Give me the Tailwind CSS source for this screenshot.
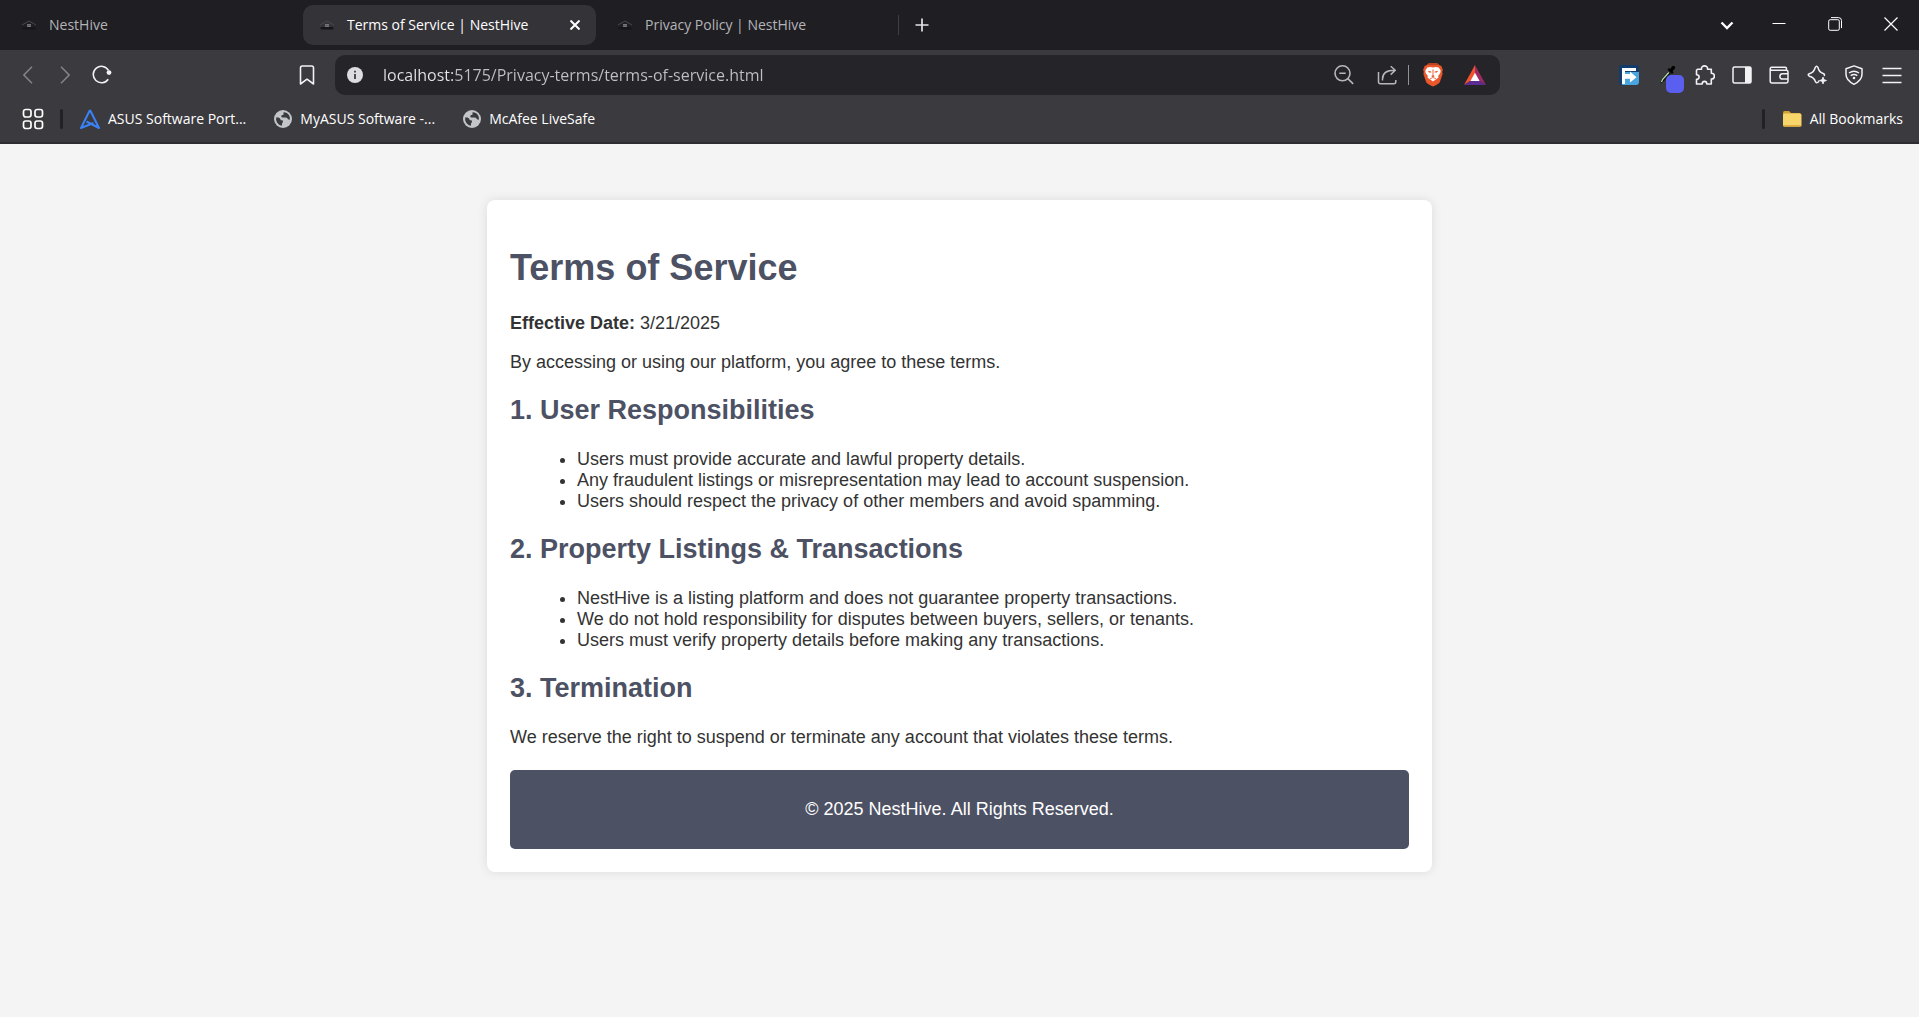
<!DOCTYPE html>
<html lang="en">
<head>
<meta charset="utf-8">
<title>Terms of Service | NestHive</title>
<script src="https://cdn.jsdelivr.net/npm/@tailwindcss/browser@4"></script>
</head>
<body class="min-h-screen bg-[#f4f4f4] font-['Liberation_Sans',Arial,sans-serif] text-[#333333]">
<svg class="hidden" aria-hidden="true">
  <symbol id="nest" viewBox="0 0 16 16"><path d="M1 8 8 4l7 4" fill="none" stroke="#48484c" stroke-width="1"/><rect x="1.500" y="10" width="13" height="2.500" rx="1" fill="#17171a"/><path d="M6.200 7h3.600v3H6.200z" fill="#858587"/><path d="M8 7v3M6.200 8.500h3.600" stroke="#4a4a4d" stroke-width=".5"/></symbol>
  <symbol id="globe" viewBox="0 0 18 18"><circle cx="9" cy="9" r="9" fill="#c3c5c9"/><path d="M2.300 7.200c2 .2 3 .4 3.700 1.200.6.800.4 1.800 1.500 1.800 1 0 1.500.4 1.500 1.500 0 1-1 1-1 2.300v1.800A6.800 6.800 0 0 1 2.300 7.200zM9.500 2.300c2.800 0 5 1.500 6 3.900.5 1.400.4 2.500.2 3.500-.8.100-1.500-.3-2-1-.5-.8-1.200-1.200-2.200-1.200H9.200C7.800 7.500 7.300 7 7.300 6.200c0-.9.900-1 1.700-1.100 1-.2.300-1.500.5-2.800z" fill="#3b3a3e"/></symbol>
</svg>

<header class="font-['Open_Sans','Noto_Sans',sans-serif]">
  <div class="flex h-[50px] items-center bg-[#1f1e23] text-sm">
    <nav class="flex items-center gap-[5px] pl-[5px]" aria-label="Tabs">
      <button class="flex h-10 w-[293px] items-center gap-3 rounded-[10px] px-4 text-[#b4b4b7]">
        <svg class="size-4 shrink-0"><use href="#nest"/></svg><span>NestHive</span>
      </button>
      <div class="flex h-10 w-[293px] items-center rounded-[10px] bg-[#343338] px-4 text-white">
        <button class="flex flex-1 items-center gap-3"><svg class="size-4 shrink-0"><use href="#nest"/></svg><span class="whitespace-nowrap">Terms of Service | NestHive</span></button>
        <button aria-label="Close tab"><svg class="size-2.5" viewBox="0 0 10 10" fill="none" stroke="currentColor" stroke-width="2"><path d="m.5.5 9 9m0-9-9 9"/></svg></button>
      </div>
      <button class="flex h-10 w-[293px] items-center gap-3 rounded-[10px] px-4 text-[#b4b4b7]">
        <svg class="size-4 shrink-0"><use href="#nest"/></svg><span class="whitespace-nowrap">Privacy Policy | NestHive</span>
      </button>
    </nav>
    <span class="ml-1 h-5 w-px bg-[#3f3e43]"></span>
    <button class="ml-4 text-[#e3e3e6]" aria-label="New tab"><svg class="size-3.5" viewBox="0 0 14 14" stroke="currentColor" stroke-width="1.700"><path d="M7 .5v13M.5 7h13"/></svg></button>
    <div class="ml-auto flex text-white">
      <button class="flex w-12 justify-center" aria-label="Search tabs"><svg class="size-4" viewBox="0 0 16 16" fill="none" stroke="currentColor" stroke-width="2.300"><path d="m2.500 5.500 5.500 5.500 5.500-5.500"/></svg></button>
      <button class="flex w-14 justify-center" aria-label="Minimize"><svg class="size-3.5" viewBox="0 0 14 14" stroke="currentColor"><path d="M.5 6.500h13"/></svg></button>
      <button class="flex w-14 justify-center" aria-label="Restore"><svg class="size-3.5" viewBox="0 0 14 14" fill="none" stroke="currentColor"><rect x=".7" y="2.700" width="10.600" height="10.600" rx="1.500"/><path d="M3 .6h7.500a3 3 0 0 1 3 3v7.500"/></svg></button>
      <button class="flex w-14 justify-center" aria-label="Close"><svg class="size-3.5" viewBox="0 0 14 14" stroke="currentColor" stroke-width="1.200"><path d="m.5.5 13 13m0-13-13 13"/></svg></button>
    </div>
  </div>

  <div class="border-b-2 border-[#2d2c31] bg-[#3b3a3e] pt-[5px]">
    <div class="flex h-10 items-center">
      <div class="flex w-[335px] shrink-0 items-center pr-2.5 pl-[9px] text-[#f2f2f4]">
        <button class="flex w-[37px] justify-center text-[#85848a]" aria-label="Back"><svg class="h-[18px] w-2.5" viewBox="0 0 10 18" fill="none" stroke="currentColor" stroke-width="1.500"><path d="M9 .8.900 9 9 17.200"/></svg></button>
        <button class="flex w-[37px] justify-center text-[#85848a]" aria-label="Forward"><svg class="h-[18px] w-2.5" viewBox="0 0 10 18" fill="none" stroke="currentColor" stroke-width="1.500"><path d="M1 .8 9.100 9 1 17.200"/></svg></button>
        <button class="flex w-[37px] justify-center" aria-label="Reload"><svg class="size-5" viewBox="0 0 20 20" fill="none" stroke="currentColor" stroke-width="1.600"><path d="M16.200 14.200A8.200 8.200 0 1 1 16.500 5.300"/><circle cx="17" cy="7.600" r="2.400" fill="currentColor" stroke="none"/></svg></button>
        <button class="ml-auto flex w-[37px] justify-center" aria-label="Bookmark this page"><svg class="h-5 w-4" viewBox="0 0 16 20" fill="none" stroke="currentColor" stroke-width="1.600" stroke-linejoin="round"><path d="M1.500 2.800Q1.500 1 3.300 1h9.400q1.800 0 1.800 1.800V19L8 14.200 1.500 19z"/></svg></button>
      </div>
      <div class="flex h-10 min-w-0 flex-1 items-center rounded-[10px] bg-[#252428] pr-[7px] pl-3">
        <button aria-label="Site information"><svg class="size-4" viewBox="0 0 16 16"><circle cx="8" cy="8" r="8" fill="#dddce1"/><path d="M8 7v5M8 3.800v1.700" stroke="#3b3a3e" stroke-width="1.800"/></svg></button>
        <input aria-label="Address" value="localhost:5175/Privacy-terms/terms-of-service.html" class="ml-5 min-w-0 flex-1 bg-[linear-gradient(90deg,#e6e6ea_72px,#c0c0c5_72px)] bg-clip-text text-base text-transparent outline-none">
        <div class="flex items-center text-[#b7b6bb]">
          <button class="flex w-11 justify-center" aria-label="Zoom"><svg class="size-5" viewBox="0 0 20 20" fill="none" stroke="currentColor" stroke-width="1.600"><circle cx="8.500" cy="8.300" r="7.500"/><path d="M5.300 8.300h6.400M13.800 13.600l5.400 5.200"/></svg></button>
          <button class="flex w-[42px] justify-center" aria-label="Share"><svg class="size-5" viewBox="0 0 20 20" fill="none" stroke="currentColor" stroke-width="1.500" stroke-linejoin="round"><path d="M1.500 7v9.700q0 2 2 2h13.300q2 0 2-2V15M5.500 15.500V14c0-6 4-8.700 12-8.700M13.700 1.200l4.600 4.100-4.600 4.300"/></svg></button>
          <span class="h-5 w-px bg-[#929196]"></span>
          <button class="flex w-12 justify-center" aria-label="Brave Shields"><svg class="h-6 w-5" viewBox="0 0 20 24"><path d="m5.500.5 1.400-.4h6.200l1.400.4 2 1.800 1.900.7.700 2.300.8 1.300-.7 2.300.4 2-2.700 8Q16.300 20.500 10 23.500 3.700 20.500 3.100 18.900l-2.700-8 .4-2-.7-2.300.8-1.300L1.600 3l1.900-.7z" fill="#e9572b"/><path d="m6 .3.900-.2h6.200l1 .3 1.600 1.600H4.300z" fill="#b9431f"/><path d="m10 4.600 3-.5 2.700.3 2 3.200-.4 2.400-2.100 3 .2 1.800-2.600 1.600-2.800 2-2.800-2-2.600-1.600.2-1.800-2.100-3-.4-2.400 2-3.200L7 4.100z" fill="#fff"/><path d="m4.800 7.800 3.500.8.100.8-2.400.1zM15.200 7.800l-3.500.8-.1.800 2.400.1zM9.500 6.500h1l-.1 5.700 1.500.8-1.900 1.200L8.100 13l1.500-.8z" fill="#e9572b"/><path d="m7 15.800 3-1.300 3 1.300" fill="none" stroke="#e9572b" stroke-width=".8"/></svg></button>
          <button class="flex w-9 justify-center" aria-label="Brave Rewards"><svg class="h-5 w-[22px]" viewBox="0 0 22 20"><path d="M11 0 0 20l7-4.500 4-7z" fill="#f0532d"/><path d="m11 0 11 20-7-4.500-4-7z" fill="#9c2a63"/><path d="M0 20h22l-7-4.500H7z" fill="#5b2d91"/><path d="m11 7.800 4.600 8.200H6.400z" fill="#fff"/></svg></button>
        </div>
      </div>
      <div class="flex w-[419px] shrink-0 items-center justify-end pr-[9px] text-[#f2f2f4]">
        <button class="flex w-[38px] justify-center" aria-label="Form extension"><svg class="size-5" viewBox="0 0 20 20"><rect width="20" height="20" rx="3" fill="#123c6e"/><path d="M6 7h14v10q0 3-3 3H3z" fill="#4aa5df"/><path d="M3 3h14v3H6v3h5V6.500l6.500 5.800-6.500 5.200v-3.700H6V19H3z" fill="#fff"/></svg></button>
        <button class="relative flex w-[38px] justify-center" aria-label="Color picker"><svg class="size-5" viewBox="0 0 20 20"><path d="m3.500 18.500.8-4 7-8 2.600 2.300-7.500 8z" fill="#111"/><path d="m4.500 17 1-2.500 6.300-7" stroke="#b6dfa6" stroke-width="1.300" fill="none"/><path d="M10.500 4.500 12 3l1.300 1.200C15 .8 16.500.2 17.600 1.300c1.300 1.200.6 2.700-2 4.700l1 1.500L15 9z" fill="#000"/></svg><span class="absolute top-2.5 left-[18px] size-[18px] rounded-[5px] bg-[#5a5ff0]"></span></button>
        <button class="flex w-[37px] justify-center" aria-label="Extensions"><svg class="size-5" viewBox="0 0 20 20" fill="none" stroke="currentColor" stroke-width="1.600" stroke-linejoin="round"><path d="M2.500 4.200h4C6.200 2 7.700.9 9.500.9s3.300 1.100 3 3.300h3.800v4c2 0 3.100 1.200 3.100 2.900s-1.100 3-3.100 3V19h-4.500c0-1.700-.8-2.600-2.300-2.600S7.200 17.300 7.200 19H1.500v-4.600c1.600 0 2.600-.9 2.600-2.300 0-1.500-1-2.400-2.600-2.400V5.200z"/></svg></button>
        <button class="flex w-[37px] justify-center" aria-label="Side panel"><svg class="size-5" viewBox="0 0 20 20"><rect x="1" y="2" width="18" height="16" rx="1.500" fill="none" stroke="currentColor" stroke-width="1.500"/><path d="M13 2h5q1 0 1 1v14q0 1-1 1h-5z" fill="currentColor"/></svg></button>
        <button class="flex w-[38px] justify-center" aria-label="Wallet"><svg class="size-5" viewBox="0 0 20 20" fill="none" stroke="currentColor" stroke-width="1.500" stroke-linejoin="round"><path d="M17.500 5V3.500q0-1.300-1.300-1.300H2.800Q1.200 2.200 1.200 3.700T2.800 5.200h14.500q1.700 0 1.700 1.700v9.300q0 1.700-1.700 1.700H3q-1.800 0-1.800-1.700V3.700M19 8.700h-5.400a2.700 2.700 0 0 0 0 5.400H19"/></svg></button>
        <button class="flex w-[37px] justify-center" aria-label="Leo AI"><svg class="size-5" viewBox="0 0 20 20" fill="none" stroke="currentColor" stroke-width="1.500" stroke-linejoin="round"><path d="M12 15.500 11.400 17q-1.900 1.500-3-.4Q7.300 12.400 2.300 11.200q-2.200-1.500 0-2.500Q7 7.500 8.200 2.500q1.400-2.600 2.800 0Q12 7.200 16.200 8.500q2.400 1.200.6 2.400"/><path d="m16 12 .9 2.600 2.600.9-2.600.9L16 19l-.9-2.600-2.600-.9 2.600-.9z" fill="currentColor" stroke-width=".8"/></svg></button>
        <button class="flex w-[38px] justify-center" aria-label="VPN"><svg class="size-5" viewBox="0 0 20 20" fill="none" stroke="currentColor" stroke-width="1.500" stroke-linejoin="round"><path d="m10 .9 8 2.800v5.600c0 4.500-3.500 7.800-8 10-4.500-2.200-8-5.500-8-10V3.700z"/><path d="M5 8q5-3.500 10 0M6.700 10.600q3.300-2.400 6.600 0"/><circle cx="10" cy="13" r="1.300" fill="currentColor" stroke="none"/></svg></button>
        <button class="flex w-[37px] justify-center" aria-label="Menu"><svg class="size-5" viewBox="0 0 20 20" stroke="currentColor" stroke-width="1.600"><path d="M.5 3.500h19M.5 10.500h19M.5 17.500h19"/></svg></button>
      </div>
    </div>

    <nav class="flex h-[47px] items-center px-4 text-sm text-white" aria-label="Bookmarks">
      <button class="ml-1.5" aria-label="All apps"><svg class="size-[22px]" viewBox="0 0 22 22" fill="none" stroke="currentColor" stroke-width="1.700"><rect x="1.500" y="1.500" width="7.500" height="7.500" rx="2.200"/><rect x="13" y="1.500" width="7.500" height="7.500" rx="2.200"/><rect x="1.500" y="13" width="7.500" height="7.500" rx="2.200"/><rect x="13" y="13" width="7.500" height="7.500" rx="2.200"/></svg></button>
      <span class="ml-4 h-5 w-[3px] rounded-full bg-[#222126]"></span>
      <a href="#" class="ml-[17px] flex items-center gap-2 whitespace-nowrap"><svg class="size-5" viewBox="0 0 20 20" fill="none" stroke="#3b82f6" stroke-width="2" stroke-linejoin="round"><path d="M10 1 1 19l12.500-5M10 1l9 18L6.500 12.500"/></svg>ASUS Software Port...</a>
      <a href="#" class="ml-7 flex items-center gap-2 whitespace-nowrap"><svg class="size-[18px]"><use href="#globe"/></svg>MyASUS Software -...</a>
      <a href="#" class="ml-7 flex items-center gap-2 whitespace-nowrap"><svg class="size-[18px]"><use href="#globe"/></svg>McAfee LiveSafe</a>
      <span class="ml-auto h-5 w-[3px] rounded-full bg-[#222126]"></span>
      <button class="ml-[17px] flex items-center gap-2 whitespace-nowrap"><svg class="size-5" viewBox="0 0 20 20"><path d="M1 4q0-2 1.500-2H7l2 2h8q2 0 2 2v9H1z" fill="#d49f35"/><rect x="1" y="4.500" width="18.500" height="13" rx="1.500" fill="#f7d56a"/><path d="M1 16q0 1.700 1.500 1.700h15.500q1.500 0 1.500-1.700z" fill="#dfae3f"/></svg>All Bookmarks</button>
    </nav>
  </div>
</header>

<div class="px-4 py-14">
  <main class="mx-auto max-w-[945px] rounded-lg bg-white px-[23px] pt-[47px] pb-[23px] text-lg leading-[21px] shadow-[0_0_11px_rgba(0,0,0,0.1)]">
    <h1 class="mb-6 text-4xl leading-[42px] font-bold text-[#4d5164]">Terms of Service</h1>
    <p class="mb-[18px]"><strong>Effective Date:</strong> 3/21/2025</p>
    <p class="mb-[21px]">By accessing or using our platform, you agree to these terms.</p>
    <h2 class="mb-[23px] text-[27px] leading-8 font-bold text-[#4d5164]">1. User Responsibilities</h2>
    <ul class="mb-[21px] list-disc pl-[67px]">
      <li>Users must provide accurate and lawful property details.</li>
      <li>Any fraudulent listings or misrepresentation may lead to account suspension.</li>
      <li>Users should respect the privacy of other members and avoid spamming.</li>
    </ul>
    <h2 class="mb-[23px] text-[27px] leading-8 font-bold text-[#4d5164]">2. Property Listings &amp; Transactions</h2>
    <ul class="mb-[21px] list-disc pl-[67px]">
      <li>NestHive is a listing platform and does not guarantee property transactions.</li>
      <li>We do not hold responsibility for disputes between buyers, sellers, or tenants.</li>
      <li>Users must verify property details before making any transactions.</li>
    </ul>
    <h2 class="mb-[23px] text-[27px] leading-8 font-bold text-[#4d5164]">3. Termination</h2>
    <p class="mb-[22px]">We reserve the right to suspend or terminate any account that violates these terms.</p>
    <footer class="rounded-[5px] bg-[#4d5164] py-[29px] text-center text-white">© 2025 NestHive. All Rights Reserved.</footer>
  </main>
</div>
</body>
</html>
